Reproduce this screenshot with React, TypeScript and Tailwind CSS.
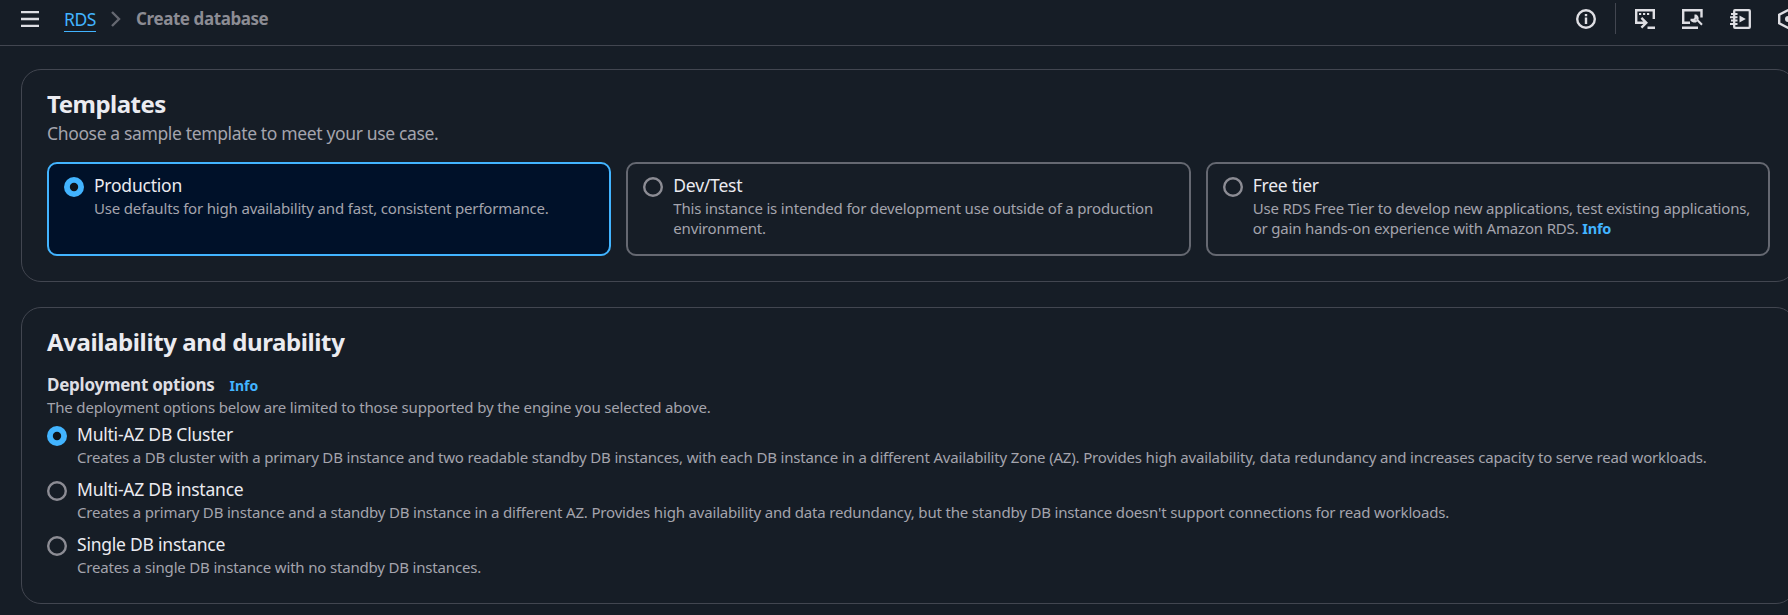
import React from "react";

type Choice = { title: string; text: React.ReactNode; selected?: boolean };

const templates: Choice[] = [
  { title: "Production", text: "Use defaults for high availability and fast, consistent performance.", selected: true },
  { title: "Dev/Test", text: <>This instance is intended for development use outside of a production<br />environment.</> },
  {
    title: "Free tier",
    text: (
      <>
        Use RDS Free Tier to develop new applications, test existing applications,<br />or gain hands-on experience with Amazon RDS.{" "}
        <a className="text-[14.5px] font-bold text-[#42b4ff]">Info</a>
      </>
    ),
  },
];

const deployments: Choice[] = [
  {
    title: "Multi-AZ DB Cluster",
    text: "Creates a DB cluster with a primary DB instance and two readable standby DB instances, with each DB instance in a different Availability Zone (AZ). Provides high availability, data redundancy and increases capacity to serve read workloads.",
    selected: true,
  },
  {
    title: "Multi-AZ DB instance",
    text: "Creates a primary DB instance and a standby DB instance in a different AZ. Provides high availability and data redundancy, but the standby DB instance doesn't support connections for read workloads.",
  },
  { title: "Single DB instance", text: "Creates a single DB instance with no standby DB instances." },
];

function Radio({ selected }: { selected?: boolean }) {
  return (
    <svg className="mt-1 h-5 w-5 shrink-0" viewBox="0 0 20 20">
      {selected ? (
        <>
          <circle cx="10" cy="10" r="10" fill="#42b4ff" />
          <circle cx="10" cy="10" r="4.2" fill="#0f141a" />
        </>
      ) : (
        <circle cx="10" cy="10" r="8.8" fill="none" stroke="#8c8c94" strokeWidth="2.4" />
      )}
    </svg>
  );
}

function Option({ item }: { item: Choice }) {
  return (
    <div className="flex gap-[10px]">
      <Radio selected={item.selected} />
      <div className="min-w-0 whitespace-nowrap">
        <div className="text-[17.5px] leading-[25px] tracking-[-0.23px] text-[#ebebf0]">{item.title}</div>
        <div className="text-[15px] leading-5 tracking-[-0.175px] text-[#a4a4ad]">{item.text}</div>
      </div>
    </div>
  );
}

function HeaderIcons() {
  return (
    <div className="flex h-[31px] shrink-0 items-center text-[#dedee3]">
      <svg className="h-5 w-5 shrink-0" viewBox="0 0 20 20" fill="none" stroke="currentColor" strokeWidth="2.4">
        <circle cx="10" cy="10" r="8.8" />
        <path d="M10 8.5V15M10 5v2.2" />
      </svg>
      <div className="ml-[19px] h-[31px] w-px bg-[#424650]" />
      <svg className="ml-[19px] h-5 w-5 shrink-0" viewBox="0 0 20 20" fill="none" stroke="currentColor" strokeWidth="2.4">
        <path d="M5 13.8H1.200V1.200h17.600V10" />
        <path d="M4 5h2.200M8 5h2.200M12 5h2.200" strokeWidth="2" />
        <path d="M5 13.800H11M6.400 8.900l4.900 4.900-4.900 4.900M12.500 18.800H20" />
      </svg>
      <svg className="ml-[27px] h-5 w-[21px] shrink-0" viewBox="0 0 21 20" fill="none" stroke="currentColor" strokeWidth="2.4">
        <path d="M8 13.800H1.200V1.200h18.300V8.500M0 18.800h16" />
        <path d="M13.500 5.500v3.200a2.500 2.500 0 0 1-2.500 2.200H8.500M13.500 6.500a3.600 3.600 0 0 1 1.800 4.500l4.700 4.700M9.300 10.900a3.700 3.700 0 0 0 5.200 1" strokeWidth="2.1" />
      </svg>
      <svg className="ml-[27px] h-5 w-[21px] shrink-0" viewBox="0 0 21 20" fill="none" stroke="currentColor" strokeWidth="2.3">
        <rect x="4.200" y="1.200" width="15.600" height="17.600" rx="0.800" />
        <path d="M1 5h6.500M0 8.300h7.500M1 11.600h6.500M0 14.900h7.500" strokeWidth="2" />
        <path d="M9.500 6.600l6.300 3.400-6.300 3.400z" fill="currentColor" stroke="none" />
      </svg>
      <svg className="ml-[27px] h-5 w-5 shrink-0" viewBox="0 0 20 20" fill="none" stroke="currentColor" strokeWidth="2.4">
        <path d="M10 1.200l8.800 4.500v8.600L10 18.800l-8.800-4.500V5.700z" />
        <circle cx="10" cy="10" r="3" fill="currentColor" stroke="none" />
      </svg>
    </div>
  );
}

export default function App() {
  return (
    <div className="h-[615px] w-full overflow-hidden bg-[#161d26] font-['Noto_Sans',sans-serif]">
      <header className="flex h-[46px] items-start border-b border-[#424650] pl-[21px] pt-[3px]">
        <svg className="mt-2 h-4 w-[18px] shrink-0" viewBox="0 0 18 16" stroke="#dedee3" strokeWidth="2.3">
          <path d="M0 1.200h18M0 8h18M0 14.800h18" />
        </svg>
        <nav className="ml-[25px] flex h-8 items-center text-[17px] leading-[26px]">
          <a className="mb-px h-[26px] border-b border-[#42b4ff] text-[17.5px] leading-[26px] tracking-[-0.4px] text-[#42b4ff]">RDS</a>
          <svg className="ml-[15px] h-4 w-[10px]" viewBox="0 0 10 16" fill="none" stroke="#656871" strokeWidth="2.4">
            <path d="M1 1l7 7-7 7" />
          </svg>
          <span className="ml-[15px] font-bold tracking-[-0.42px] text-[#8c8c94]">Create database</span>
        </nav>
        <div className="-mr-[10px] ml-auto">
          <HeaderIcons />
        </div>
      </header>

      <main className="ml-[21px] flex w-[1775px] flex-col gap-[25px] pt-[23px]">
        <section className="h-[213px] rounded-[20px] border border-[#424650] px-[25px] pt-[18px]">
          <h2 className="text-[24px] font-bold leading-[32px] tracking-[-0.5px] text-[#ebebf0]">Templates</h2>
          <p className="text-[17.5px] leading-[26px] tracking-[-0.36px] text-[#a4a4ad]">Choose a sample template to meet your use case.</p>
          <div className="mt-4 grid grid-cols-3 gap-[15px]">
            {templates.map((t) => (
              <div
                key={t.title}
                className={
                  t.selected
                    ? "h-[94px] rounded-[10px] border-2 border-[#42b4ff] bg-[#001129] px-[15px] pt-[9px]"
                    : "h-[94px] rounded-[10px] border-2 border-[#656871] px-[15px] pt-[9px]"
                }
              >
                <Option item={t} />
              </div>
            ))}
          </div>
        </section>

        <section className="h-[297px] rounded-[20px] border border-[#424650] px-[25px] pt-[18px]">
          <h2 className="text-[24px] font-bold leading-[32px] tracking-[-0.39px] text-[#ebebf0]">Availability and durability</h2>
          <div className="mt-[14px] flex items-baseline gap-[15px] leading-[25px]">
            <h3 className="text-[17px] font-bold tracking-[-0.25px] text-[#dedee3]">Deployment options</h3>
            <a className="text-[14px] font-bold text-[#42b4ff]">Info</a>
          </div>
          <p className="-mt-px text-[15px] leading-5 tracking-[-0.155px] text-[#a4a4ad]">The deployment options below are limited to those supported by the engine you selected above.</p>
          <div className="mt-[5px] flex flex-col gap-[10px]">
            {deployments.map((d) => (
              <Option key={d.title} item={d} />
            ))}
          </div>
        </section>
      </main>
    </div>
  );
}
